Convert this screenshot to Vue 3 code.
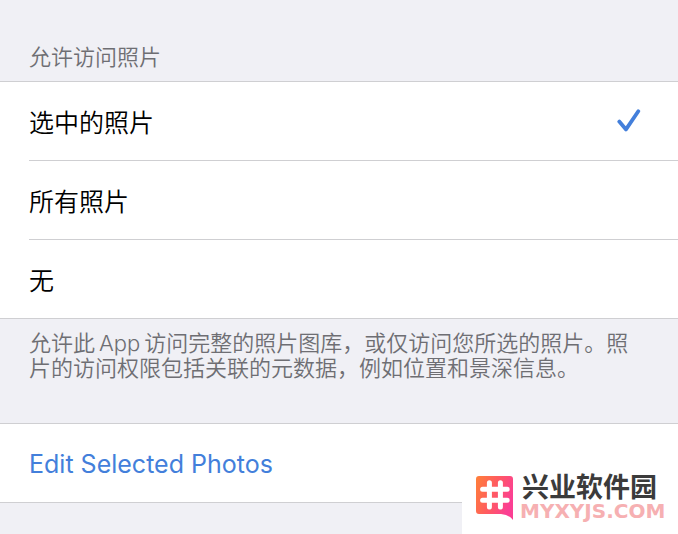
<template>
  <main class="settings">
    <fieldset class="group">
      <legend class="group-title">允许访问照片</legend>
      <div class="list">
        <label v-for="option in options" :key="option.value" class="row">
          <input v-model="access" class="radio" type="radio" name="access" :value="option.value" />
          <span class="row-body">
            <span>{{ option.label }}</span>
            <svg v-if="access === option.value" class="check" viewBox="0 0 24 24" aria-hidden="true">
              <path d="M2.3 12.6 L9 20.4 L21.3 2.2" />
            </svg>
          </span>
        </label>
      </div>
    </fieldset>

    <p class="note">
      允许此&#8201;App&#8201;访问完整的照片图库，或仅访问您所选的照片。照片的访问权限包括关联的元数据，例如位置和景深信息。
    </p>

    <div class="list">
      <button class="action" type="button">Edit Selected Photos</button>
    </div>

    <aside class="brand">
      <svg class="brand-logo" viewBox="0 0 38 45" aria-hidden="true">
        <defs>
          <linearGradient id="brand-fill" x1="0" y1="0" x2="1" y2="0.4">
            <stop offset="0%" stop-color="#ff8038" />
            <stop offset="55%" stop-color="#ff5a62" />
            <stop offset="100%" stop-color="#fb3f93" />
          </linearGradient>
        </defs>
        <path
          d="M3 0 H34 Q37 0 37 3 V44 Q33 38.5 25 38 H3 Q0 38 0 35 V3 Q0 0 3 0 Z"
          fill="url(#brand-fill)"
        />
        <path class="hash" d="M13.4 6.8 V31 M24.4 6.8 V31 M6.6 13.2 H31.2 M6.6 24.2 H31.2" />
      </svg>
      <div class="brand-text">
        <strong class="brand-name">兴业软件园</strong>
        <span class="brand-site">MYXYJS.COM</span>
      </div>
    </aside>
  </main>
</template>

<script setup>
import { ref } from 'vue';

const options = [
  { value: 'selected', label: '选中的照片' },
  { value: 'all', label: '所有照片' },
  { value: 'none', label: '无' }
];

const access = ref('selected');
</script>

<style>
body {
  margin: 0;
  background: #f0f0f5;
}
</style>

<style scoped>
.settings {
  position: relative;
  box-sizing: border-box;
  min-height: 100vh;
  padding-top: 40px;
  overflow: hidden;
  font-family: Inter, "Noto Sans CJK SC", sans-serif;
  font-weight: 350;
  color: #000;
}

.group {
  min-width: 0;
  margin: 0;
  padding: 0;
  border: 0;
}

.group-title {
  padding: 0 29px 7px;
  font-size: 22px;
  line-height: 34px;
  color: #6e6e73;
}

.list {
  border-top: 1px solid #cfcfd2;
  border-bottom: 1px solid #cfcfd2;
  background: #fff;
}

.row {
  display: block;
  position: relative;
  padding-left: 29px;
  cursor: pointer;
}

.radio {
  position: absolute;
  opacity: 0;
}

.row-body {
  display: flex;
  align-items: center;
  justify-content: space-between;
  height: 78px;
  padding-right: 37px;
  font-size: 25px;
}

.row + .row .row-body {
  border-top: 1px solid #cfcfd2;
}

.check {
  width: 24px;
  height: 24px;
  fill: none;
  stroke: #437fdb;
  stroke-width: 3.8;
  stroke-linecap: round;
  stroke-linejoin: round;
}

.note {
  margin: 0;
  padding: 12px 40px 42px 29px;
  font-size: 22px;
  line-height: 25px;
  color: #6e6e73;
}

.action {
  display: block;
  width: 100%;
  height: 78px;
  padding: 2px 29px 0;
  border: 0;
  background: none;
  font-family: inherit;
  font-size: 25px;
  font-weight: 400;
  text-align: left;
  color: #437fdb;
  cursor: pointer;
}

.brand {
  position: absolute;
  right: 0;
  bottom: 0;
  display: flex;
  gap: 6px;
  box-sizing: border-box;
  width: 216px;
  height: 62px;
  padding: 4px 0 0 14px;
  background: #fff;
}

.brand-logo {
  flex: none;
  width: 38px;
  height: 45px;
}

.hash {
  fill: none;
  stroke: #fff;
  stroke-width: 5;
  stroke-linecap: round;
}

.brand-text {
  display: flex;
  flex-direction: column;
}

.brand-name {
  padding-left: 2px;
  font-size: 27px;
  font-weight: 700;
  line-height: 24px;
  color: #3b3b3b;
}

.brand-site {
  font-family: "DejaVu Sans", sans-serif;
  font-size: 20px;
  font-weight: 700;
  line-height: 22px;
  color: #f6b0b2;
}
</style>
